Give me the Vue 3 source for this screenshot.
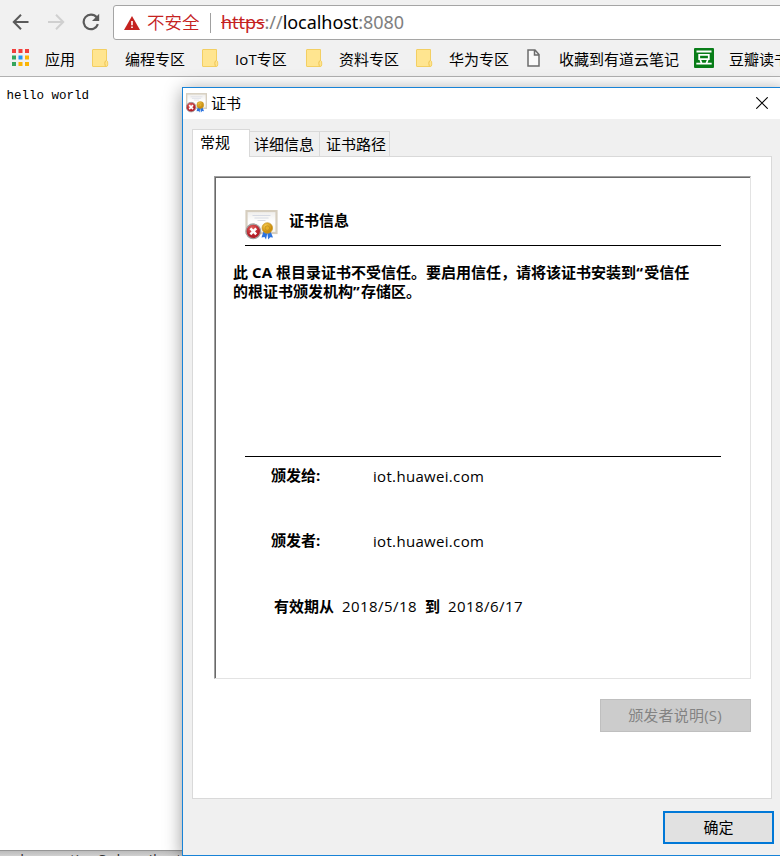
<script setup>
const bookmarks = [
  { icon: 'apps', label: '应用', kind: 'w2' },
  { icon: 'folder', label: '编程专区', kind: 'w4' },
  { icon: 'folder', label: 'IoT专区', kind: 'iot' },
  { icon: 'folder', label: '资料专区', kind: 'w4' },
  { icon: 'folder', label: '华为专区', kind: 'w4' },
  { icon: 'file', label: '收藏到有道云笔记', kind: 'w8' },
  { icon: 'douban', label: '豆瓣读书', kind: 'w4' },
]
const appColors = ['#f23f3c', '#f23f3c', '#f23f3c', '#35a55d', '#2196f3', '#fbb405', '#35a55d', '#fbb405', '#fbb405']
const parties = [
  { label: '颁发给:', value: 'iot.huawei.com' },
  { label: '颁发者:', value: 'iot.huawei.com' },
]
const tabs = ['常规', '详细信息', '证书路径']
</script>

<template>
  <div class="screen">
    <header class="toolbar">
      <nav class="nav">
        <svg width="18" height="18" viewBox="0 0 18 18" class="ic">
          <path d="M16.5 9H2M9 1.8 1.8 9 9 16.2" fill="none" stroke="#5a5a5a" stroke-width="2" />
        </svg>
        <svg width="18" height="18" viewBox="0 0 18 18" class="ic">
          <path d="M1 9h14.500M9 1.800 16.200 9 9 16.200" fill="none" stroke="#d0d0d0" stroke-width="2" />
        </svg>
        <svg width="18" height="18" viewBox="0 0 18 18" class="ic">
          <path d="M14.700 4.300A7.300 7.300 0 1 0 15.900 11.200" fill="none" stroke="#5a5a5a" stroke-width="2.200" />
          <path d="M17.200 0.800v7.200H10z" fill="#5a5a5a" />
        </svg>
      </nav>
      <div class="omnibox">
        <svg class="warn" width="16" height="14" viewBox="0 0 16 14">
          <path d="M8 0 16 14H0z" fill="#c5221f" />
          <path d="M7.200 5h1.600v4.300H7.200zM7.200 10.400h1.600V12H7.200z" fill="#fff" />
        </svg>
        <span class="insecure">不安全</span>
        <i class="sep"></i>
        <span class="url"><s>https</s><em>://</em>localhost<em>:8080</em></span>
      </div>
    </header>
    <div class="bookmarks">
      <div v-for="b in bookmarks" :key="b.label" class="bm">
        <span class="bm-icon">
          <svg v-if="b.icon === 'apps'" class="apps" width="17" height="17" viewBox="0 0 17 17">
            <rect v-for="(c, i) in appColors" :key="i" :x="(i % 3) * 6.500" :y="Math.floor(i / 3) * 6.500" width="4" height="4" :fill="c" />
          </svg>
          <svg v-else-if="b.icon === 'folder'" width="17" height="18" viewBox="0 0 17 18">
            <path d="M1 .500H14.500V11.500Q16 12 15.700 14V16Q15.600 17.500 14 17.500H1Q.500 17.500.500 17V1Q.500.500 1 .500z" fill="#ffe590" stroke="#f3cf62" />
            <path d="M14.500 11.500Q12.500 12 12.800 14.500Q13.200 17.400 14 17.500" fill="none" stroke="#efc451" />
          </svg>
          <svg v-else-if="b.icon === 'file'" class="file" width="13" height="18" viewBox="0 0 13 18">
            <path d="M1 1H8L12 5.500V17H1zM7.500 1V6H12" fill="#fafafa" stroke="#6c6c6c" stroke-width="1.500" />
          </svg>
          <svg v-else class="douban" width="20" height="20" viewBox="0 0 20 20">
            <rect width="20" height="20" rx="1" fill="#087d18" />
            <path d="M2.500 3.500h15M5.200 6.800h9.600v4.400H5.200zM2.300 15.700h15.400M6.300 12l1.400 3.500M13.700 12l-1.400 3.500" fill="none" stroke="#fff" stroke-width="1.800" />
          </svg>
        </span>
        <span class="bm-label" :class="b.kind">{{ b.label }}</span>
      </div>
    </div>
    <main class="page">hello world</main>
    <div class="behind"><span class="b1">url</span><span class="b2">operation</span><span class="b3">Subscribe to</span></div>

    <section class="dialog">
      <div class="title">
        <svg class="cert" width="21" height="20" viewBox="0 0 32 30"><use href="#certificate" /></svg>
        <span>证书</span>
        <svg class="close" width="12" height="12" viewBox="0 0 12 12"><path d="M.3.300 11.700 11.700M11.700.300.300 11.700" stroke="#000" stroke-width="1.100" /></svg>
      </div>
      <div class="tabs">
        <div v-for="(t, i) in tabs" :key="t" class="tab" :class="{ active: i === 0 }">{{ t }}</div>
      </div>
      <div class="sheet">
        <div class="panel">
          <div class="panel-in">
            <div class="head">
              <svg width="33" height="30" viewBox="0 0 32 30">
                <defs>
                  <linearGradient id="paper" x1="0" y1="0" x2="0" y2="1"><stop offset="0" stop-color="#eeedea" /><stop offset=".500" stop-color="#fff" /><stop offset="1" stop-color="#f5f4ee" /></linearGradient>
                  <radialGradient id="red" cx=".4" cy=".3"><stop offset="0" stop-color="#e4625e" /><stop offset="1" stop-color="#b5202a" /></radialGradient>
                  <radialGradient id="gold" cx=".4" cy=".35"><stop offset="0" stop-color="#ffd65c" /><stop offset="1" stop-color="#cb8d0b" /></radialGradient>
                  <g id="certificate">
                    <rect x="1" y="1" width="30" height="22" fill="url(#paper)" stroke="#d6cebf" stroke-width="2.200" />
                    <path d="M7 5.500h18M9 8h14M12 10.500h8" stroke="#d3d7e1" stroke-width=".9" />
                    <path d="M18.500 20 16 27.500l3-.5L20.500 29.500l1.500-7zM24.500 20l3 7.500-2.800-.3-2 2.300-1-7z" fill="#2d74df" />
                    <circle cx="21.800" cy="18" r="5.300" fill="url(#gold)" stroke="#c99a2c" stroke-width=".7" />
                    <circle cx="21.800" cy="18" r="2.300" fill="#e7af26" stroke="#b98a20" stroke-width=".7" />
                    <circle cx="7.800" cy="21.300" r="7.300" fill="url(#red)" stroke="#a0a0a0" stroke-width="1.300" />
                    <path d="M4.900 18.300 10.700 24.300M10.700 18.300 4.900 24.300" stroke="#fff" stroke-width="2.500" />
                  </g>
                </defs>
                <use href="#certificate" />
              </svg>
              <b>证书信息</b>
            </div>
            <div class="message">此 <span class="ca">CA</span> 根目录证书不受信任。要启用信任，请将该证书安装到<q>“</q>受信任<br />的根证书颁发机构<q>”</q>存储区。</div>
            <div class="details">
              <div v-for="p in parties" :key="p.label" class="party"><b>{{ p.label }}</b><span class="host">{{ p.value }}</span></div>
              <div class="validity"><b class="from">有效期从</b><span class="date">2018/5/18</span><b class="to">到</b><span class="date">2018/6/17</span></div>
            </div>
          </div>
        </div>
        <button class="statement" disabled>颁发者说明(S)</button>
      </div>
      <div class="footer"><button class="ok">确定</button></div>
    </section>
  </div>
</template>

<style>
body { overflow: hidden; }
</style>

<style scoped>
* { box-sizing: border-box; }
.screen { position: relative; width: 780px; height: 856px; overflow: hidden; background: #fff; color: #000; font: 15px/20px "Open Sans", "Noto Sans CJK SC", sans-serif; white-space: nowrap; }
svg { display: block; flex: none; }
.toolbar { height: 43px; background: #f1f1f1; display: flex; padding-top: 5px; }
.nav { width: 113px; height: 34px; display: flex; align-items: center; gap: 17px; padding-left: 12px; flex: none; }
.omnibox { width: 680px; height: 35px; flex: none; background: #fff; border: 1px solid #a5a5a5; border-radius: 3px 0 0 3px; display: flex; align-items: center; padding-left: 10px; }
.insecure { color: #c5221f; font-size: 17.500px; font-weight: 350; margin: -2px 0 0 7px; width: 53px; }
.sep { width: 1px; height: 20px; background: #a0a0a0; margin: 0 10px 0 10px; }
.url { font-family: "Noto Sans", sans-serif; font-size: 18px; letter-spacing: -.05px; margin-top: -2px; }
.url s { color: #c5221f; }
.url em { color: #808080; font-style: normal; }
.bookmarks { height: 34px; background: #f1f1f1; border-bottom: 1px solid #b1b1b1; display: flex; padding: 0 0 0 12px; align-items: center; }
.bm { display: flex; align-items: center; gap: 13px; padding-right: 17px; flex: none; }
.bm-icon { width: 20px; height: 20px; margin-top: -3px; display: flex; align-items: center; }
.bm-label { margin-top: -2px; }
.apps { margin-top: -2px; }
.file { margin-left: 1px; }
.douban { margin-left: -2px; }
.w2 { width: 30px; }
.w4 { width: 60px; }
.w8 { width: 120px; }
.iot { width: 54px; letter-spacing: .1px; }
.page { height: 773px; padding: 9px 0 0 6.500px; font: 12.500px/20px "Liberation Mono", monospace; }
.behind { height: 6px; overflow: hidden; border-top: 1px solid #969696; background: linear-gradient(#bbb, #d0d0d0); color: #333; font-size: 15px; line-height: 15px; display: flex; }
.behind span { margin-top: 1px; flex: none; }
.b1 { padding-left: 5px; width: 29px; }
.b2 { width: 69px; }
.b3 { letter-spacing: .6px; }
.dialog { position: absolute; left: 182px; top: 87px; width: 604px; height: 769px; border: 1px solid #1883d7; background: #f0f0f0; box-shadow: 0 3px 17px rgba(0, 0, 0, .4); display: flex; flex-direction: column; }
.title { height: 31px; flex: none; background: #fff; display: flex; align-items: center; padding-left: 3px; }
.title span { margin: -2px 0 0 4px; }
.cert { margin-top: -1px; }
.close { margin: -1px 17px 0 auto; }
.tabs { display: flex; align-items: flex-end; height: 37px; padding-left: 9px; flex: none; }
.tab { height: 25px; border: 1px solid #d9d9d9; border-width: 1px 1px 0 0; width: 70px; padding: 2px 0 0 4px; }
.tab:last-child { padding-left: 6px; }
.tab.active { height: 28px; width: 58px; background: #fff; border-left-width: 1px; padding: 2px 0 0 7px; margin-bottom: -1px; z-index: 1; }
.sheet { width: 580px; height: 643px; margin-left: 9px; flex: none; background: #fff; border: 1px solid #d9d9d9; padding: 19px 20px 0 21px; display: flex; flex-direction: column; align-items: flex-end; }
.panel { width: 537px; height: 503px; flex: none; border: 1px solid #a0a0a0; border-right-color: #e3e3e3; border-bottom-color: #e3e3e3; }
.panel-in { height: 501px; border: solid #696969; border-width: 1px 0 0 1px; }
.head { margin-left: 29px; width: 476px; height: 68px; border-bottom: 1px solid #000; display: flex; align-items: flex-end; padding-bottom: 5px; gap: 11px; }
.head b { align-self: flex-end; margin-bottom: 10px; }
.message { height: 210px; padding: 17px 0 0 17px; font-weight: 700; line-height: 19px; }
.message q { quotes: none; display: inline-block; width: 8px; }
.message q::before, .message q::after { content: none; }
.ca { letter-spacing: .2px; }
.details { margin-left: 29px; width: 476px; border-top: 1px solid #000; padding-top: 8px; }
.party { display: flex; height: 65px; padding-left: 26px; }
.party b { width: 102px; }
.host { letter-spacing: .32px; padding-top: 1px; }
.validity { display: flex; padding: 1px 0 0 29px; }
.from { width: 68px; }
.date { width: 83px; letter-spacing: .45px; }
.to { width: 23px; }
button { font: inherit; padding: 0 0 2px; text-align: center; border-radius: 0; }
.statement { width: 151px; height: 33px; flex: none; margin-top: 20px; background: #ccc; border: 1px solid #bfbfbf; color: #838383; letter-spacing: .2px; padding-right: 1px; }
.footer { padding: 12px 11px 0 0; display: flex; justify-content: flex-end; }
.ok { width: 111px; height: 33px; background: #e1e1e1; border: 2px solid #0078d7; color: #000; }
</style>
